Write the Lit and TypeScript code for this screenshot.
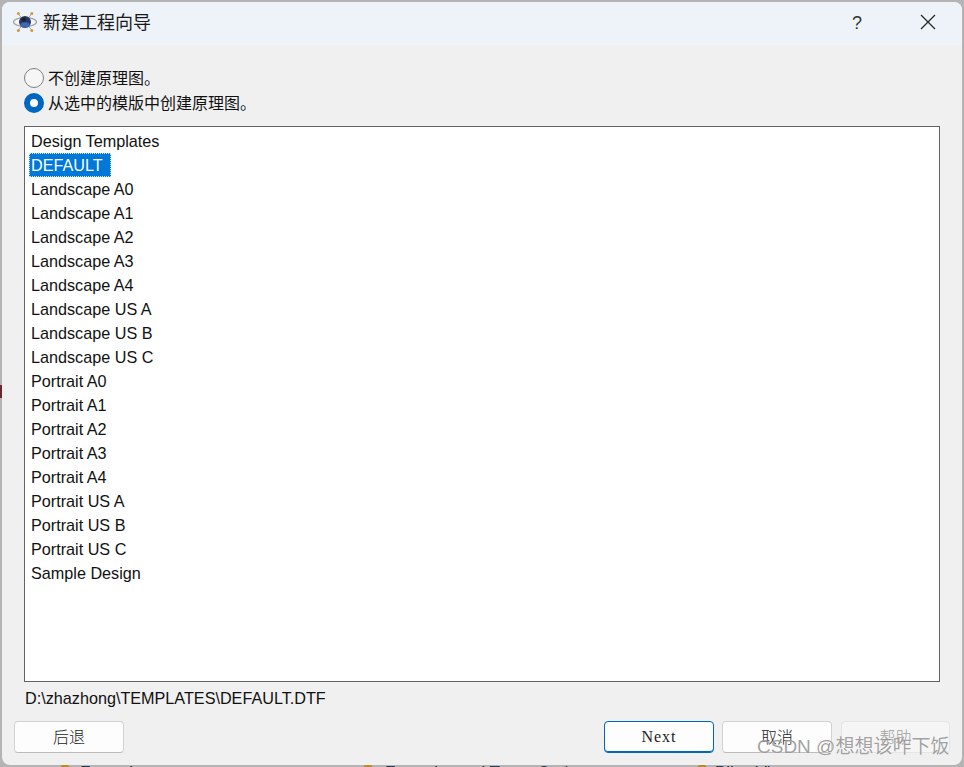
import { LitElement, html, css, svg } from "lit";
import { customElement } from "lit/decorators.js";

const ITEMS = [
  "Design Templates", "DEFAULT", "Landscape A0", "Landscape A1", "Landscape A2", "Landscape A3", "Landscape A4",
  "Landscape US A", "Landscape US B", "Landscape US C", "Portrait A0", "Portrait A1", "Portrait A2", "Portrait A3",
  "Portrait A4", "Portrait US A", "Portrait US B", "Portrait US C", "Sample Design",
];

const atom = svg`
  <svg class="logo" width="26" height="22" viewBox="0 0 26 22">
    <ellipse cx="13" cy="11" rx="11.5" ry="4.4" fill="#f4f6f8" stroke="#a4a9b0" stroke-width="1.4"/>
    <path d="M6 2.6 L20 19.4 M20 2.4 L6 19.6" stroke="#b9a585" stroke-width="1" fill="none"/>
    <circle cx="13" cy="11" r="6" fill="#2a3a63"/>
    <ellipse cx="13" cy="14" rx="4.6" ry="2.8" fill="#3f68b8"/>
    <circle cx="11.8" cy="8.6" r="2.2" fill="#1a1f30"/>
    <circle cx="6.4" cy="2.6" r="1.5" fill="#cf9a45"/>
    <circle cx="19.8" cy="2.4" r="1.5" fill="#cf9a45"/>
    <circle cx="6.4" cy="19.4" r="1.5" fill="#cf9a45"/>
    <circle cx="19.8" cy="19.6" r="1.5" fill="#cf9a45"/>
  </svg>`;

@customElement("app-root")
export class AppRoot extends LitElement {
  static styles = css`
    :host {
      display: block;
      position: relative;
      width: 964px;
      height: 767px;
      overflow: hidden;
      background: #b4b4b4;
      font-family: "Liberation Sans", "Noto Sans CJK SC", sans-serif;
      font-size: 16.2px;
      color: #000;
    }
    .under {
      position: absolute;
      top: 764px;
      font-size: 17px;
      line-height: 18px;
      color: #2f3f50;
      white-space: nowrap;
    }
    .dot {
      position: absolute;
      top: 764px;
      width: 10px;
      height: 10px;
      border-radius: 50%;
      background: #b88c2e;
    }
    .edge {
      position: absolute;
      left: 0;
      top: 385px;
      width: 2px;
      height: 13px;
      background: #6b2a2a;
    }
    .dialog {
      position: relative;
      box-sizing: border-box;
      margin: 2px 2px 0;
      width: 960px;
      height: 763px;
      border-radius: 8px;
      background: #f0f0f0;
      overflow: hidden;
      display: flex;
      flex-direction: column;
    }
    .titlebar {
      box-sizing: border-box;
      flex: none;
      height: 43px;
      background: #eef3fa;
      display: flex;
      align-items: center;
      padding: 0 0 4px 10px;
      color: #1a1a1a;
    }
    .logo { flex: none; margin-right: 5px; }
    .title { font-size: 18px; line-height: 39px; font-family: "Noto Sans CJK SC", sans-serif; flex: 1; }
    .help {
      width: 20px;
      margin-top: 4px;
      text-align: center;
      font-size: 18px;
      color: #333;
      font-family: "Liberation Sans", sans-serif;
      margin-right: 53px;
    }
    .close { flex: none; margin-right: 26px; }
    .body {
      flex: 1;
      display: flex;
      flex-direction: column;
      padding: 20px 12px 0 12px;
    }
    .radio {
      height: 25px;
      display: flex;
      align-items: center;
      margin-left: 10px;
      gap: 4px;
      font-family: "Noto Sans CJK SC", sans-serif;
      font-size: 16px;
      color: #111;
    }
    .radio span { margin-bottom: 2px; }
    .circle {
      box-sizing: border-box;
      width: 20px;
      height: 20px;
      border-radius: 50%;
      background: #f6f6f6;
      border: 1px solid #808080;
    }
    .circle.on {
      background: #fff;
      border: 6px solid #0067c0;
    }
    .list {
      box-sizing: border-box;
      flex: none;
      margin: 11px 0 0 10px;
      width: 916px;
      height: 556px;
      background: #fff;
      border: 1px solid #646464;
      padding: 2px 4px;
    }
    .row { height: 24px; line-height: 24px; white-space: nowrap; color: #111; }
    .row span {
      box-sizing: border-box;
      display: inline-block;
      padding: 0 8px 0 2px;
      height: 24px;
      vertical-align: top;
    }
    .row.sel span {
      background: #0078d7;
      color: #fff;
      outline: 1px dotted #cfe4f7;
      outline-offset: -1px;
    }
    .path {
      box-sizing: border-box;
      margin: 4px 0 0 11px;
      height: 24px;
      line-height: 24px;
      color: #111;
    }
    .buttons {
      margin-top: 11px;
      display: flex;
      justify-content: space-between;
    }
    .group { display: flex; gap: 8px; }
    .btn {
      box-sizing: border-box;
      width: 110px;
      height: 32px;
      padding-bottom: 2px;
      border: 1px solid #d2d2d2;
      border-bottom-color: #bcbcbc;
      border-radius: 4px;
      background: #fdfdfd;
      display: flex;
      align-items: center;
      justify-content: center;
      font-family: "Noto Sans CJK SC", sans-serif;
      font-size: 16px;
      font-weight: 300;
      color: #222;
    }
    .btn.primary {
      border: 1px solid #0067c0;
      box-shadow: inset 0 -1px 0 #0067c0;
      padding-bottom: 0;
      font-family: "Liberation Serif", serif;
      font-size: 16px;
      letter-spacing: 1px;
      font-weight: 400;
      color: #222;
    }
    .btn.off {
      margin-left: 1px;
      background: #f5f5f5;
      border-color: #e5e5e5;
      color: #a0a0a0;
      width: 109px;
    }
    .watermark {
      position: absolute;
      left: 757px;
      top: 735px;
      font-family: "Liberation Sans", "Noto Sans CJK SC", sans-serif;
      font-size: 19px;
      line-height: 24px;
      white-space: nowrap;
      color: rgba(120, 120, 120, 0.7);
      text-shadow: 0 0 1px rgba(255, 255, 255, 0.8);
    }
  `;

  render() {
    return html`
      <div class="under" style="left:80px">Footprints</div>
      <div class="under" style="left:385px">Footprint and Trace Options</div>
      <div class="under" style="left:715px">Bliss Vias</div>
      <div class="dot" style="left:60px"></div>
      <div class="dot" style="left:363px"></div>
      <div class="dot" style="left:697px"></div>
      <div class="edge"></div>
      <div class="dialog">
        <div class="titlebar">
          ${atom}
          <div class="title">新建工程向导</div>
          <div class="help">?</div>
          <svg class="close" width="16" height="16" viewBox="0 0 16 16">
            <path d="M1 1 L15 15 M15 1 L1 15" stroke="#222" stroke-width="1.2" fill="none"/>
          </svg>
        </div>
        <div class="body">
          <div class="radio"><div class="circle"></div><span>不创建原理图。</span></div>
          <div class="radio"><div class="circle on"></div><span>从选中的模版中创建原理图。</span></div>
          <div class="list">
            ${ITEMS.map(
              (t) => html`<div class="row ${t === "DEFAULT" ? "sel" : ""}"><span>${t}</span></div>`
            )}
          </div>
          <div class="path">D:\\zhazhong\\TEMPLATES\\DEFAULT.DTF</div>
          <div class="buttons">
            <div class="btn">后退</div>
            <div class="group">
              <div class="btn primary">Next</div>
              <div class="btn">取消</div>
              <div class="btn off">帮助</div>
            </div>
          </div>
        </div>
      </div>
      <div class="watermark">CSDN @想想该咋下饭</div>
    `;
  }
}
